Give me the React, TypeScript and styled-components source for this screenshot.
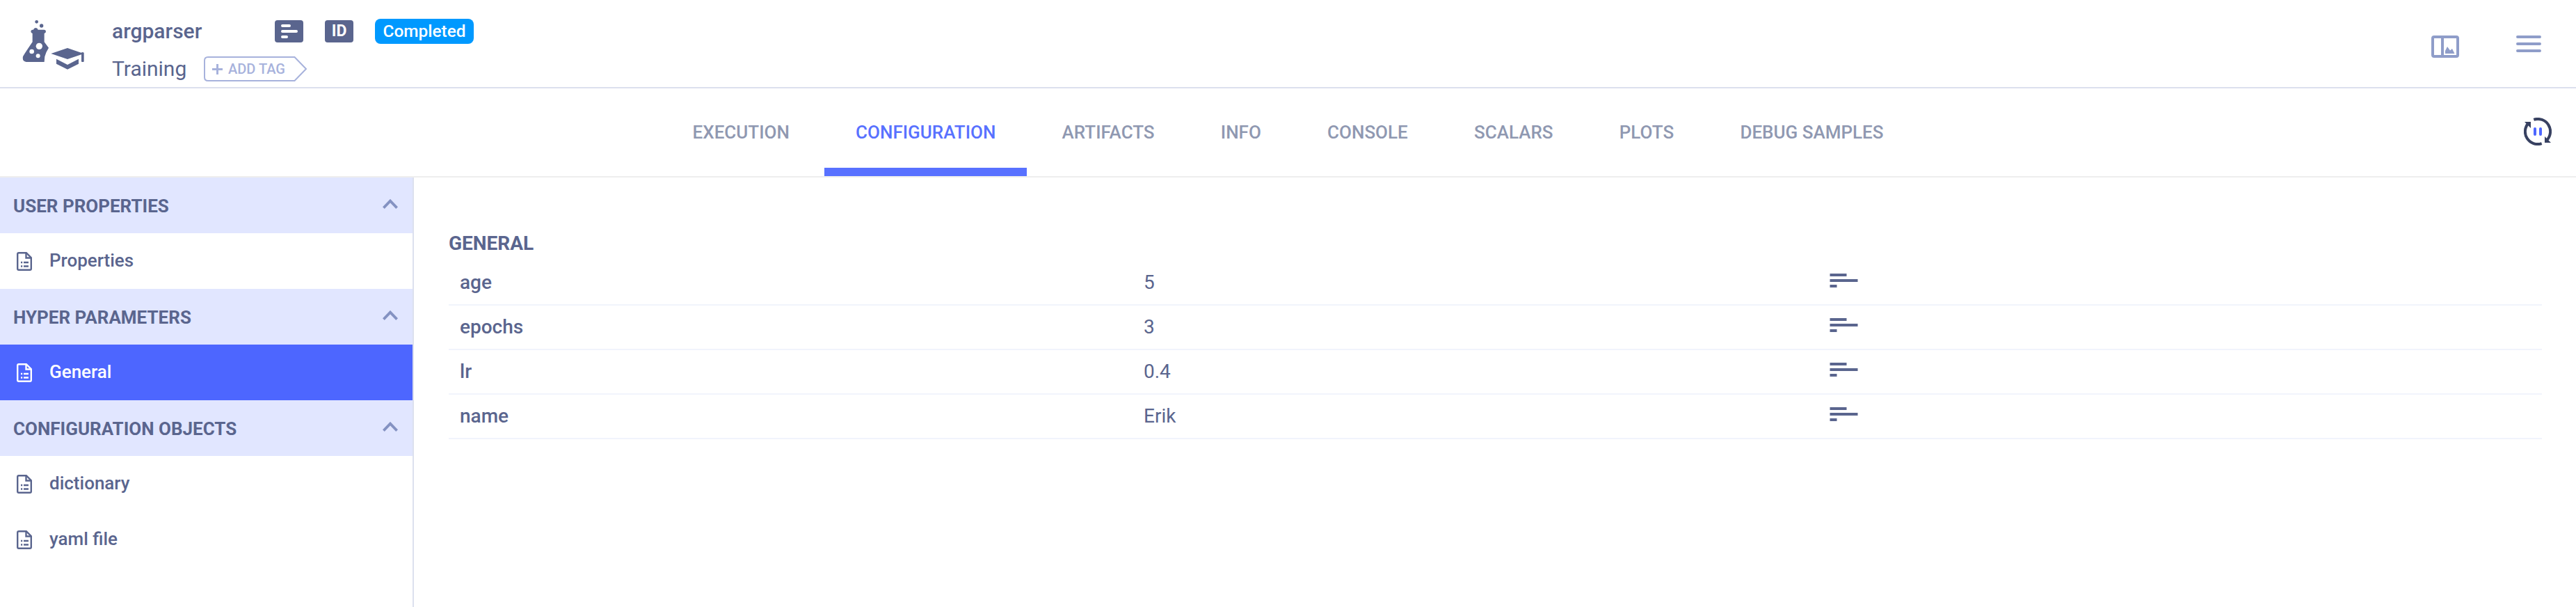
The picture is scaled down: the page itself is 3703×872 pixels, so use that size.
import React from "react";
import styled, { createGlobalStyle } from "styled-components";

const color = {
  text: "#5a658e",
  muted: "#8f9dc9",
  tab: "#8f98b1",
  accent: "#4d66ff",
  ink: "#5871ff",
  section: "#e1e6ff",
  border: "#dce0ee",
  tag: "#a7b2dc",
  status: "#0099ff",
};

const GlobalStyle = createGlobalStyle`
  * { box-sizing: border-box; }
  body { margin: 0; background: #fff; }
  svg { display: block; flex: none; }
`;

const Page = styled.div`
  display: flex;
  flex-direction: column;
  height: 872px;
  overflow: hidden;
  font-family: Roboto, sans-serif;
  color: ${color.text};
  background: #fff;
`;

const Header = styled.header`
  display: flex;
  align-items: flex-start;
  height: 127px;
  flex: none;
  padding: 27px 50px 0 32px;
  border-bottom: 2px solid ${color.border};
`;

const TypeIcon = styled.div`
  padding-top: 1px;
  width: 129px;
`;

const Titles = styled.div`
  display: flex;
  flex-direction: column;
  gap: 18px;
  flex: 1;
`;

const TitleRow = styled.div`
  display: flex;
  align-items: center;
  height: 36px;
`;

const Name = styled.h1`
  margin: 0;
  width: 234px;
  font-size: 30px;
  font-weight: 500;
  line-height: 36px;
`;

const Kind = styled.span`
  width: 132px;
  font-size: 30px;
  line-height: 36px;
`;

const Badge = styled.span`
  display: flex;
  align-items: center;
  justify-content: center;
  width: 41px;
  height: 32px;
  margin-right: 31px;
  border-radius: 4px;
  background: ${color.text};
  color: #fff;
  font-size: 23px;
  font-weight: 700;
  line-height: 32px;
`;

const Status = styled.span`
  width: 142px;
  height: 36px;
  border-radius: 8px;
  background: ${color.status};
  color: #fff;
  font-size: 24.4px;
  font-weight: 500;
  line-height: 36px;
  text-align: center;
`;

const Tag = styled.div`
  position: relative;
  display: flex;
  align-items: center;
  width: 150px;
  height: 36px;
  padding-left: 12px;
  gap: 8px;
  color: ${color.tag};
  font-size: 20px;
  font-weight: 500;
  line-height: 38px;
`;

const TagShape = styled.svg`
  position: absolute;
  left: 0;
  top: 0;
`;

const Actions = styled.div`
  display: flex;
  gap: 82px;
  padding-top: 24px;
`;

const TabBar = styled.nav`
  display: grid;
  grid-template-columns: 1fr auto 1fr;
  height: 128px;
  flex: none;
  border-bottom: 2px solid #eeeeee;
`;

const TabList = styled.div`
  grid-column: 2;
  display: flex;
  gap: 6px;
`;

const Tab = styled.div<{ $active?: boolean }>`
  height: 126px;
  padding: 0 44.6px;
  font-size: 26px;
  font-weight: 500;
  line-height: 126px;
  color: ${(p) => (p.$active ? color.ink : color.tab)};
  box-shadow: ${(p) => (p.$active ? `inset 0 -12px ${color.ink}` : "none")};
`;

const Refresh = styled.div`
  display: flex;
  justify-content: flex-end;
  padding: 42px 35px 0 0;
`;

const Body = styled.div`
  display: flex;
  flex: 1;
`;

const Sidebar = styled.aside`
  width: 595px;
  flex: none;
  border-right: 2px solid ${color.border};
`;

const SectionHead = styled.div`
  display: flex;
  align-items: center;
  justify-content: space-between;
  height: 80px;
  padding: 2px 21px 0 19px;
  background: ${color.section};
  font-size: 26px;
  font-weight: 700;
  svg { margin-bottom: 6px; }
`;

const Item = styled.div<{ $selected?: boolean }>`
  display: flex;
  align-items: center;
  gap: 25px;
  height: 80px;
  padding: 0 24px 2px;
  font-size: 26px;
  font-weight: 500;
  color: ${(p) => (p.$selected ? "#fff" : color.text)};
  background: ${(p) => (p.$selected ? color.accent : "#fff")};
  svg { margin-top: 3px; }
`;

const Main = styled.main`
  flex: 1;
  padding: 79px 49px 0 50px;
`;

const GroupTitle = styled.h2`
  margin: 0 0 9px;
  font-size: 28px;
  font-weight: 700;
  line-height: 32px;
`;

const Row = styled.div`
  display: grid;
  grid-template-columns: 983px 986px 1fr;
  align-items: center;
  height: 64px;
  padding: 0 0 2px 16px;
  border-bottom: 2px solid #f1f4fc;
  font-size: 28px;
  svg { margin-bottom: 4px; }
`;

const Key = styled.span`
  font-weight: 500;
`;

const ExperimentIcon = () => (
  <svg width="92" height="72" viewBox="36 24 276 216" fill={color.text}>
    <circle cx="98" cy="34" r="7" />
    <circle cx="119" cy="51" r="8" />
    <path d="M80 68 L84 68 Q86 61 94 60 Q102 61 104 68 H131 Q138 69 138 76 Q138 82 131 84 V121 L150 146 Q137 166 133 184 L131 207 H53 Q35 204 39 184 Q45 172 80 121 V84 Q73 82 73 76 Q73 69 80 68Z" />
    <g fill="#fff">
      <circle cx="109" cy="139" r="14" />
      <circle cx="77" cy="162" r="10" />
      <circle cx="104" cy="181" r="9" />
    </g>
    <path d="M160 171 L231 147 L290 167 Q296 163 302 167 V204 Q302 207 299 207 H294 Q291 207 291 204 V175 L231 195Z" />
    <path d="M183 194 L231 219 L279 194 V215 L231 239 L183 215Z" />
  </svg>
);

const NotesIcon = () => (
  <svg width="24" height="20" viewBox="0 0 24 20" stroke="#fff" strokeWidth="4" strokeLinecap="round">
    <path d="M2 2H12M2 10H22M2 18H8" />
  </svg>
);

const PlusIcon = () => (
  <svg width="15" height="15" viewBox="0 0 15 15" stroke="currentColor" strokeWidth="3">
    <path d="M0 7.5H15M7.5 0V15" />
  </svg>
);

const PanelIcon = () => (
  <svg width="40" height="32" viewBox="0 0 40 32" fill="none" stroke={color.muted} strokeWidth="4">
    <rect x="2" y="2" width="36" height="28" rx="2" />
    <path d="M16 2V30" />
    <path d="M20 26V22L23 16L27 21.5L30 19L33.5 26Z" fill={color.muted} stroke="none" />
  </svg>
);

const MenuIcon = () => (
  <svg width="36" height="24" viewBox="0 0 36 24" stroke={color.muted} strokeWidth="4" strokeLinecap="round">
    <path d="M2 2H34M2 12H34M2 22H34" />
  </svg>
);

const AutoRefreshIcon = () => (
  <svg width="40" height="40" viewBox="0 0 40 40" fill="none">
    <g stroke="#384161" strokeWidth="4">
      <path d="M14.3 2.9A18 18 0 0 1 33 32.5" />
      <path d="M25.7 37.1A18 18 0 0 1 7 7.5" />
    </g>
    <path d="M1 6H10V15ZM39 36H30V27Z" fill="#384161" />
    <path d="M16 16V24M24 16V24" stroke={color.accent} strokeWidth="4" strokeLinecap="round" />
  </svg>
);

const ChevronUp = () => (
  <svg width="22" height="14" viewBox="0 0 22 14" fill="none" stroke="#8492c2" strokeWidth="3.8">
    <path d="M1.4 12.6L11 2.6L20.6 12.6" />
  </svg>
);

const DocIcon = () => (
  <svg width="22" height="27" viewBox="0 0 22 27" fill="none" stroke="currentColor" strokeWidth="2.4">
    <path d="M3 1.2H13.8L20.8 8.2V24Q20.8 25.8 19 25.8H3Q1.2 25.8 1.2 24V3Q1.2 1.2 3 1.2Z" />
    <path d="M13.5 1.2V8.5H20.8" />
    <path d="M6 15H8.2M10 15H17M6 20.5H8.2M10 20.5H17" />
  </svg>
);

const LinesIcon = () => (
  <svg width="41" height="20" viewBox="0 0 41 20" fill={color.text}>
    <path d="M.5 0H24.5V4H.5ZM.5 8H40.5V12H.5ZM.5 16H10.5V20H.5Z" />
  </svg>
);

const tabs = ["EXECUTION", "CONFIGURATION", "ARTIFACTS", "INFO", "CONSOLE", "SCALARS", "PLOTS", "DEBUG SAMPLES"];

const sections = [
  { title: "USER PROPERTIES", items: ["Properties"] },
  { title: "HYPER PARAMETERS", items: ["General"] },
  { title: "CONFIGURATION OBJECTS", items: ["dictionary", "yaml file"] },
];

const params = [
  ["age", "5"],
  ["epochs", "3"],
  ["lr", "0.4"],
  ["name", "Erik"],
];

export default function App() {
  return (
    <Page>
      <GlobalStyle />
      <Header>
        <TypeIcon><ExperimentIcon /></TypeIcon>
        <Titles>
          <TitleRow>
            <Name>argparser</Name>
            <Badge><NotesIcon /></Badge>
            <Badge>ID</Badge>
            <Status>Completed</Status>
          </TitleRow>
          <TitleRow>
            <Kind>Training</Kind>
            <Tag>
              <TagShape width="150" height="36" viewBox="0 0 150 36" fill="none" stroke={color.tag} strokeWidth="2">
                <path d="M6 1H130.5L147 18L130.5 35H6Q1 35 1 30V6Q1 1 6 1Z" />
              </TagShape>
              <PlusIcon />
              ADD TAG
            </Tag>
          </TitleRow>
        </Titles>
        <Actions>
          <PanelIcon />
          <MenuIcon />
        </Actions>
      </Header>
      <TabBar>
        <TabList>
          {tabs.map((t) => (
            <Tab key={t} $active={t === "CONFIGURATION"}>{t}</Tab>
          ))}
        </TabList>
        <Refresh><AutoRefreshIcon /></Refresh>
      </TabBar>
      <Body>
        <Sidebar>
          {sections.map((s) => (
            <React.Fragment key={s.title}>
              <SectionHead>{s.title}<ChevronUp /></SectionHead>
              {s.items.map((i) => (
                <Item key={i} $selected={i === "General"}><DocIcon />{i}</Item>
              ))}
            </React.Fragment>
          ))}
        </Sidebar>
        <Main>
          <GroupTitle>GENERAL</GroupTitle>
          {params.map(([k, v]) => (
            <Row key={k}>
              <Key>{k}</Key>
              <span>{v}</span>
              <LinesIcon />
            </Row>
          ))}
        </Main>
      </Body>
    </Page>
  );
}
